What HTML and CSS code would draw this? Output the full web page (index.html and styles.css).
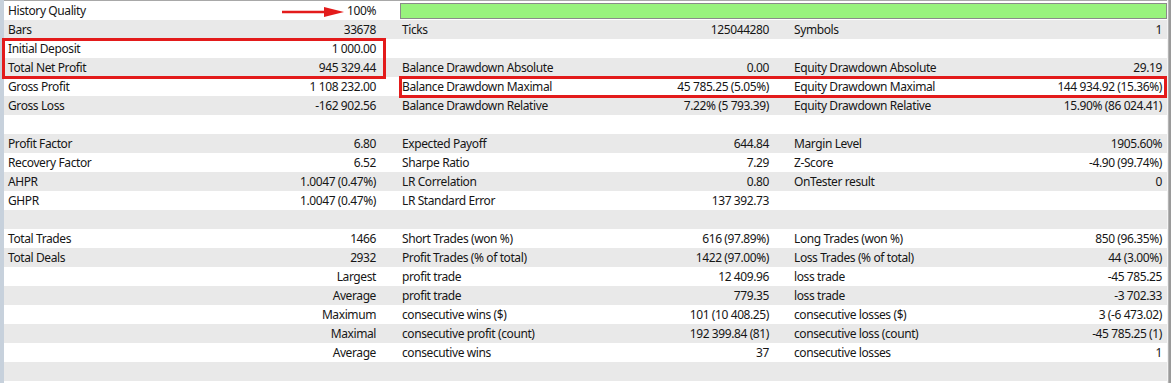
FILE: index.html
```html
<!DOCTYPE html>
<html>
<head>
<meta charset="utf-8">
<link rel="stylesheet" href="styles.css">
</head>
<body>
<div class="window">
  <div class="strip"></div>
  <div class="report">
    <div class="row">
      <div class="grp g1"><span>History Quality</span><span>100%</span></div>
      <div class="quality"></div>
    </div>
    <div class="row alt">
      <div class="grp g1"><span>Bars</span><span>33678</span></div>
      <div class="grp g2"><span>Ticks</span><span>125044280</span></div>
      <div class="grp g3"><span>Symbols</span><span>1</span></div>
    </div>
    <div class="row">
      <div class="grp g1"><span>Initial Deposit</span><span>1 000.00</span></div>
      <div class="grp g2"></div>
      <div class="grp g3"></div>
    </div>
    <div class="row alt">
      <div class="grp g1"><span>Total Net Profit</span><span>945 329.44</span></div>
      <div class="grp g2"><span>Balance Drawdown Absolute</span><span>0.00</span></div>
      <div class="grp g3"><span>Equity Drawdown Absolute</span><span>29.19</span></div>
    </div>
    <div class="row">
      <div class="grp g1"><span>Gross Profit</span><span>1 108 232.00</span></div>
      <div class="grp g2"><span>Balance Drawdown Maximal</span><span>45 785.25 (5.05%)</span></div>
      <div class="grp g3"><span>Equity Drawdown Maximal</span><span>144 934.92 (15.36%)</span></div>
    </div>
    <div class="row alt">
      <div class="grp g1"><span>Gross Loss</span><span>-162 902.56</span></div>
      <div class="grp g2"><span>Balance Drawdown Relative</span><span>7.22% (5 793.39)</span></div>
      <div class="grp g3"><span>Equity Drawdown Relative</span><span>15.90% (86 024.41)</span></div>
    </div>
    <div class="row"></div>
    <div class="row alt">
      <div class="grp g1"><span>Profit Factor</span><span>6.80</span></div>
      <div class="grp g2"><span>Expected Payoff</span><span>644.84</span></div>
      <div class="grp g3"><span>Margin Level</span><span>1905.60%</span></div>
    </div>
    <div class="row">
      <div class="grp g1"><span>Recovery Factor</span><span>6.52</span></div>
      <div class="grp g2"><span>Sharpe Ratio</span><span>7.29</span></div>
      <div class="grp g3"><span>Z-Score</span><span>-4.90 (99.74%)</span></div>
    </div>
    <div class="row alt">
      <div class="grp g1"><span>AHPR</span><span>1.0047 (0.47%)</span></div>
      <div class="grp g2"><span>LR Correlation</span><span>0.80</span></div>
      <div class="grp g3"><span>OnTester result</span><span>0</span></div>
    </div>
    <div class="row">
      <div class="grp g1"><span>GHPR</span><span>1.0047 (0.47%)</span></div>
      <div class="grp g2"><span>LR Standard Error</span><span>137 392.73</span></div>
      <div class="grp g3"></div>
    </div>
    <div class="row alt"></div>
    <div class="row">
      <div class="grp g1"><span>Total Trades</span><span>1466</span></div>
      <div class="grp g2"><span>Short Trades (won %)</span><span>616 (97.89%)</span></div>
      <div class="grp g3"><span>Long Trades (won %)</span><span>850 (96.35%)</span></div>
    </div>
    <div class="row alt">
      <div class="grp g1"><span>Total Deals</span><span>2932</span></div>
      <div class="grp g2"><span>Profit Trades (% of total)</span><span>1422 (97.00%)</span></div>
      <div class="grp g3"><span>Loss Trades (% of total)</span><span>44 (3.00%)</span></div>
    </div>
    <div class="row">
      <div class="grp g1"><span></span><span>Largest</span></div>
      <div class="grp g2"><span>profit trade</span><span>12 409.96</span></div>
      <div class="grp g3"><span>loss trade</span><span>-45 785.25</span></div>
    </div>
    <div class="row alt">
      <div class="grp g1"><span></span><span>Average</span></div>
      <div class="grp g2"><span>profit trade</span><span>779.35</span></div>
      <div class="grp g3"><span>loss trade</span><span>-3 702.33</span></div>
    </div>
    <div class="row">
      <div class="grp g1"><span></span><span>Maximum</span></div>
      <div class="grp g2"><span>consecutive wins ($)</span><span>101 (10 408.25)</span></div>
      <div class="grp g3"><span>consecutive losses ($)</span><span>3 (-6 473.02)</span></div>
    </div>
    <div class="row alt">
      <div class="grp g1"><span></span><span>Maximal</span></div>
      <div class="grp g2"><span>consecutive profit (count)</span><span>192 399.84 (81)</span></div>
      <div class="grp g3"><span>consecutive loss (count)</span><span>-45 785.25 (1)</span></div>
    </div>
    <div class="row">
      <div class="grp g1"><span></span><span>Average</span></div>
      <div class="grp g2"><span>consecutive wins</span><span>37</span></div>
      <div class="grp g3"><span>consecutive losses</span><span>1</span></div>
    </div>
    <div class="row alt"></div>
  </div>
  <div class="edge"></div>

  <svg class="arrow" width="64" height="12" viewBox="0 0 64 12">
    <line x1="0" y1="6" x2="46" y2="6" stroke="#e31b1b" stroke-width="2.5"/>
    <polygon points="42,1 62,6 42,11" fill="#e31b1b"/>
  </svg>
  <div class="mark mark-deposit"></div>
  <div class="mark mark-drawdown"></div>
</div>
</body>
</html>
```

FILE: styles.css
```css
html, body {
  margin: 0;
  padding: 0;
  background: #ffffff;
}

.window {
  position: relative;
  display: flex;
  width: 1171px;
  height: 383px;
  font-family: "Noto Sans", "Liberation Sans", sans-serif;
  font-size: 12px;
  letter-spacing: -0.4px;
  color: #161616;
}

.strip {
  width: 4px;
  flex: none;
  background: #c7d1dc;
}

.report {
  flex: 1;
  border-top: 1px solid #a8a8a8;
  display: flex;
  flex-direction: column;
}

.edge {
  width: 4px;
  flex: none;
  background: linear-gradient(to right, #f4f4f4 0 1px, #b4b4b4 1px 2px, #9a9a9a 2px);
}

.row {
  height: 19px;
  flex: none;
  display: grid;
  grid-template-columns: 393px 393px 1fr;
  align-items: center;
  line-height: 19px;
  white-space: nowrap;
}

.row.alt {
  background: #e9e9e9;
}

.grp {
  display: flex;
  justify-content: space-between;
  padding: 0 21px 0 4px;
}

.grp.g2 {
  padding-left: 5px;
}

.grp.g3 {
  padding-right: 5px;
}

.quality {
  grid-column: 2 / 4;
  height: 14px;
  margin: 0 0 0 3px;
  border: 1px solid #8a8a8a;
  background: #98f27d;
}

.arrow {
  position: absolute;
  left: 282px;
  top: 6px;
}

.mark {
  position: absolute;
  border: 3px solid #e31b1b;
  box-sizing: border-box;
}

.mark-deposit {
  left: 2px;
  top: 38px;
  width: 384px;
  height: 41px;
}

.mark-drawdown {
  left: 399px;
  top: 76px;
  width: 768px;
  height: 22px;
}
```
